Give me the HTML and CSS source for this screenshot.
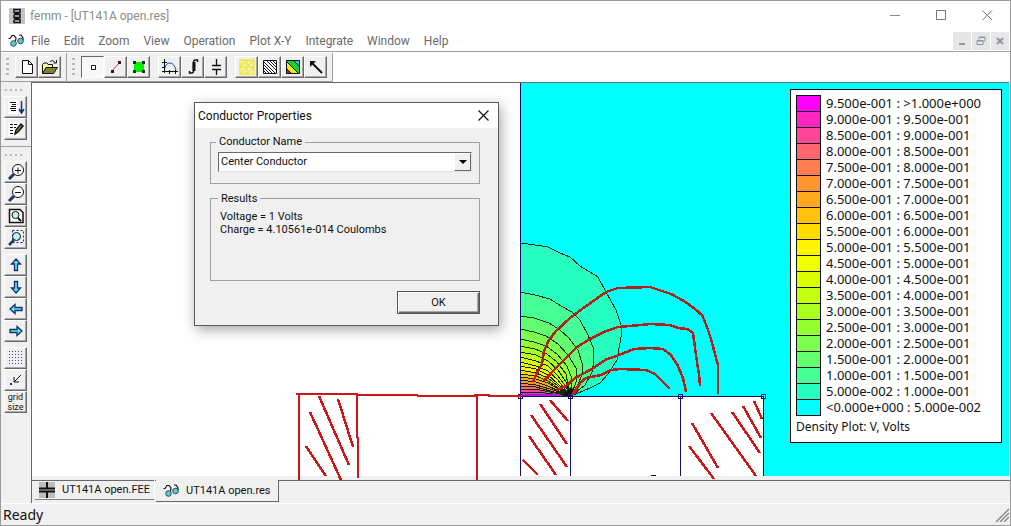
FILE: index.html
```html
<!DOCTYPE html>
<html lang="en">
<head>
<meta charset="utf-8">
<title>femm - [UT141A open.res]</title>
<link rel="stylesheet" href="styles.css">
</head>
<body>
<div class="window">
  <header class="titlebar">
    <svg class="app-icon" width="16" height="16" viewBox="0 0 16 16"><rect width="16" height="16" fill="#c4c4c4"/><g fill="none" stroke="#111" stroke-width="1.500"><path d="M4 1.500H11V4.500H5V2.500M11 4.500L5 6.500M6 6.500H11V9.500H5V7M11 9.500L5 11.500M6 11.500H11V14.500H5V12"/></g></svg>
    <h1 class="title">femm - [UT141A open.res]</h1>
    <div class="win-controls">
      <button class="win-btn" aria-label="Minimize"><svg width="11" height="11"><path d="M0 5.500H10" stroke="#888"/></svg></button>
      <button class="win-btn" aria-label="Maximize"><svg width="11" height="11"><path d="M.5.5H9.500V9.500H.5Z" fill="none" stroke="#777"/></svg></button>
      <button class="win-btn" aria-label="Close"><svg width="11" height="11"><path d="M.5.5L10 10M10 .5L.5 10" stroke="#777"/></svg></button>
    </div>
  </header>

  <nav class="menubar">
    <svg class="doc-icon" width="16" height="13" viewBox="0 0 16 13"><path d="M.5 4.500H2L4 1.500H6L8 4L7.500 7M11 1H13L15 4V6" fill="none" stroke="#111" stroke-width="1.200"/><circle cx="5.500" cy="9.500" r="2.800" fill="#6cc5c0" stroke="#256"/><circle cx="12.500" cy="7" r="2.800" fill="#6cc5c0" stroke="#256"/></svg>
    <button class="menu">File</button><button class="menu">Edit</button><button class="menu">Zoom</button><button class="menu">View</button><button class="menu">Operation</button><button class="menu">Plot X-Y</button><button class="menu">Integrate</button><button class="menu">Window</button><button class="menu">Help</button>
    <div class="mdi-controls">
      <button class="mdi-btn" aria-label="Minimize document"><svg width="10" height="10"><path d="M2 8H8" stroke="#8c96a4" stroke-width="2"/></svg></button>
      <button class="mdi-btn" aria-label="Restore document"><svg width="10" height="10"><path d="M3 3.500V1H9V5H7M3 1.500H9M1 4.500H7V8.500H1ZM1 5H7" fill="none" stroke="#8c96a4"/></svg></button>
      <button class="mdi-btn" aria-label="Close document"><svg width="10" height="10"><path d="M2 2L8 8M8 2L2 8" stroke="#8c96a4" stroke-width="2"/></svg></button>
    </div>
  </nav>

  <div class="toolbars">
    <div class="toolbar">
      <span class="grip"></span>
      <div class="group">
        <button class="tool" aria-label="New"><svg width="18" height="18"><path d="M4.500 2.500H10.500L14.500 6.500V15.500H4.500ZM10.500 2.500V6.500H14.500" fill="#fff" stroke="#111"/></svg></button>
        <button class="tool" aria-label="Open"><svg width="18" height="18"><path d="M1.500 15V6.500L3 5H6L7 6.500H11.500V9" fill="#fff59a" stroke="#111"/><path d="M1.500 15.500L5 9.500H16.500L12.500 15.500Z" fill="#85802a" stroke="#111"/><path d="M9 3.500Q12 1 14 4.500M15.500 2V5H12.500" fill="none" stroke="#111"/></svg></button>
      </div>
    </div>
    <div class="toolbar">
      <span class="grip"></span>
      <div class="group">
        <button class="tool pressed" aria-label="Point properties"><svg width="18" height="18"><path d="M7.500 7.500H11.500V11.500H7.500Z" fill="#fff" stroke="#111"/></svg></button>
        <button class="tool" aria-label="Contours"><svg width="18" height="18"><path d="M5 13L13 4" stroke="#e33"/><path d="M4 12H7V15H4ZM11 3H14V6H11Z" fill="#411"/></svg></button>
        <button class="tool" aria-label="Areas"><svg width="18" height="18"><path d="M4 4H14V14H4Z" fill="#00f000"/><path d="M3 3H6V6H3ZM12 3H15V6H12ZM3 12H6V15H3ZM12 12H15V15H12Z" fill="#131"/></svg></button>
      </div>
      <div class="group">
        <button class="tool" aria-label="Plot"><svg width="18" height="18"><path d="M3.500 1V15M1 13.500H17M1 4.500H6M1 9.500H4M8.500 12V16M14.500 12V16" stroke="#111"/><path d="M4 10Q5 5 9 5Q13 5 15 12" fill="none" stroke="#24b"/></svg></button>
        <button class="tool" aria-label="Integrate"><svg width="18" height="18"><path d="M13.500 4V2H11Q9.500 2 9.500 5V12Q9.500 15 8 15H5.500V13" fill="none" stroke="#111" stroke-width="1.500"/><path d="M10 4V13" stroke="#111" stroke-width="3"/></svg></button>
        <button class="tool" aria-label="Conductor properties"><svg width="18" height="18"><path d="M9.500 1V8M9.500 11V17M5 7.500H14M5 11.500H14" stroke="#111" stroke-width="1.300"/></svg></button>
      </div>
      <div class="group">
        <button class="tool" aria-label="Show mesh"><svg width="18" height="18"><path d="M2 2H16V16H2ZM9 2V16M2 9H16M2 9L9 2M9 9L16 2M2 16L9 9M9 16L16 9" fill="#f2efc8" stroke="#f1e735" stroke-width="1.300"/></svg></button>
        <button class="tool" aria-label="Contour plot"><svg width="18" height="18"><path d="M2.500 2.500H15.500V15.500H2.500Z" fill="#fff" stroke="#111"/><path d="M2 12L6 16M2 9L9 16M2 6L12 16M2 3L15 16M5 2L16 13M8 2L16 10M11 2L16 7" stroke="#111"/></svg></button>
        <button class="tool" aria-label="Density plot"><svg width="18" height="18"><path d="M2 2H16V16H2Z" fill="#18d12a"/><path d="M9 2H16V9Z" fill="#28cde0"/><path d="M2 3L15 16H2Z" fill="#f2ef00"/><path d="M2 10L8 16H2Z" fill="#c0c"/><path d="M2.500 2.500H15.500V15.500H2.500ZM2 10L8 16M2 3L15 16M9 2L16 9" fill="none" stroke="#111"/></svg></button>
        <button class="tool" aria-label="Vector plot"><svg width="18" height="18"><path d="M15 15L5 5" stroke="#111" stroke-width="2"/><path d="M3 3H9L3 9Z" fill="#111"/></svg></button>
      </div>
    </div>
    <div class="toolbar-rest"></div>
  </div>

  <div class="workspace">
    <aside class="sidebar">
      <div class="side-set">
        <span class="grip-h"></span>
        <div class="side-group">
          <button class="tool" aria-label="Output"><svg width="18" height="18"><path d="M1 2H11V16H1Z" fill="#fff"/><path d="M3 4.500H9M5 6.500H9M4 8.500H9M3 10.500H9M4 12.500H9" stroke="#111"/><path d="M14.500 3V14M12 11L14.500 15L17 11" fill="none" stroke="#137" stroke-width="1.500"/></svg></button>
          <button class="tool" aria-label="Notes"><svg width="18" height="18"><path d="M1 2H12V16H1Z" fill="#fff"/><path d="M3 4.500H10M3 7.500H9M3 10.500H7M3 13.500H7" stroke="#111" stroke-dasharray="3 1"/><path d="M8 14L9 10L14 4L16 6L11 12Z" fill="#885" stroke="#111" stroke-width="1.500"/></svg></button>
        </div>
      </div>
      <div class="side-set">
        <span class="grip-h"></span>
        <div class="side-group">
          <button class="tool" aria-label="Zoom in"><svg width="18" height="18"><circle cx="11" cy="7" r="5.500" fill="#fff" stroke="#111"/><path d="M8 7.500H14M11 4.500V10.500" stroke="#111"/><path d="M7 11L2 16" stroke="#236" stroke-width="3"/></svg></button>
          <button class="tool" aria-label="Zoom out"><svg width="18" height="18"><circle cx="11" cy="7" r="5.500" fill="#fff" stroke="#111"/><path d="M8 7.500H14" stroke="#111"/><path d="M7 11L2 16" stroke="#236" stroke-width="3"/></svg></button>
          <button class="tool" aria-label="Zoom to fit"><svg width="18" height="18"><path d="M2.500 2.500H13L16 5.500V15.500H2.500Z" fill="#fff" stroke="#111" stroke-width="1.500"/><circle cx="8.500" cy="8" r="3.500" fill="#bff4f6" stroke="#111"/><path d="M11 11L14 14" stroke="#111" stroke-width="2"/></svg></button>
          <button class="tool" aria-label="Zoom window"><svg width="18" height="18"><path d="M5.500 1.500H16.500V13.500H5.500Z" fill="none" stroke="#22a" stroke-dasharray="2 2"/><circle cx="9.500" cy="7.500" r="4" fill="#bff4f6" stroke="#111"/><path d="M7 11L2 16" stroke="#236" stroke-width="2.500"/></svg></button>
        </div>
        <div class="side-group">
          <button class="tool" aria-label="Pan up"><svg width="18" height="18"><path d="M9 3L13.500 8H10.500V14.500H7.500V8H4.500Z" fill="#62e3f4" stroke="#136" stroke-width="1.300"/></svg></button>
          <button class="tool" aria-label="Pan down"><svg width="18" height="18"><path d="M9 15L13.500 10H10.500V3.500H7.500V10H4.500Z" fill="#62e3f4" stroke="#136" stroke-width="1.300"/></svg></button>
          <button class="tool" aria-label="Pan left"><svg width="18" height="18"><path d="M3 9L8 4.500V7.500H15V10.500H8V13.500Z" fill="#62e3f4" stroke="#136" stroke-width="1.300"/></svg></button>
          <button class="tool" aria-label="Pan right"><svg width="18" height="18"><path d="M15 9L10 4.500V7.500H3V10.500H10V13.500Z" fill="#62e3f4" stroke="#136" stroke-width="1.300"/></svg></button>
        </div>
        <div class="side-group">
          <button class="tool" aria-label="Show grid"><svg width="18" height="18"><path d="M2 2.500H16M2 5.500H16M2 8.500H16M2 11.500H16M2 14.500H16" stroke="#44a" stroke-dasharray="1 2"/></svg></button>
          <button class="tool" aria-label="Snap to grid"><svg width="18" height="18"><path d="M14 4L7 11M7 6V11H12" fill="none" stroke="#111"/><path d="M3 12H5V14H3Z" fill="#22a"/></svg></button>
          <button class="tool tool-text">grid<br>size</button>
        </div>
      </div>
    </aside>

    <main class="document">
      <div class="view">
        <svg class="plot" width="100%" height="100%">
          <rect x="489" width="100%" height="100%" fill="#0ff"/>
          <g transform="translate(-32 -83)">
            <path d="M520 396H764V476H520Z" fill="#fff"/>
            <g stroke="#063008" stroke-width="1" shape-rendering="crispEdges">
              <path fill="#26ffc0" d="M520 243L535 245L548 247L560 253L570 257L580 266L598 277L606 292L616 310L621 325L621 337L617 360L608 374L600 383L590 388L571 396H520Z"/>
              <path fill="#46ff96" d="M520 292L535 295L550 299L561 306L572 312L580 320L588 335L593 347L594 360L592 372L585 385L571 396H520Z"/>
              <path fill="#64ff71" d="M520 316L534 318L549 323L560 330L569 338L578 350L582 363L582 374L578 385L571 396H520Z"/>
              <path fill="#7dff50" d="M520 329L534 332L546 336L558 344L568 355L576 368L577 379L571 396H520Z"/>
              <path fill="#96ff32" d="M520 339L534 342L546 346L557 354L567 366L572 379L571 396H520Z"/>
              <path fill="#aaff1e" d="M520 346L535 349L547 354L557 362L566 374L570 396H520Z"/>
              <path fill="#c3ff0f" d="M520 352L536 355L548 361L558 370L566 382L570 396H520Z"/>
              <path fill="#dcff00" d="M520 357L536 361L548 366L558 376L566 387L570 396H520Z"/>
              <path fill="#f0ff00" d="M520 362L536 366L548 371L558 380L570 396H520Z"/>
              <path fill="#fff500" d="M520 366L536 369L548 375L558 384L570 396H520Z"/>
              <path fill="#ffdc00" d="M520 370L536 373L548 378L558 386L570 396H520Z"/>
              <path fill="#ffc30f" d="M520 374L536 376L548 381L570 396H520Z"/>
              <path fill="#ffaa1e" d="M520 377L536 379L548 383L570 396H520Z"/>
              <path fill="#ff9632" d="M520 380L536 382L548 386L570 396H520Z"/>
              <path fill="#ff7d50" d="M520 383L536 385L550 389L570 396H520Z"/>
              <path fill="#ff6471" d="M520 386L536 387L550 391L570 396H520Z"/>
              <path fill="#ff4696" d="M520 389L540 390L570 396H520Z"/>
              <path fill="#e32bd0" d="M520 392L545 393L570 396H520Z"/>
            </g>
            <path d="M564 392L567 390L571 387L574 390L578 391L576 394L571 396H564Z" fill="#111"/>
            <g fill="none" stroke="#10106e" shape-rendering="crispEdges">
              <path d="M520.500 83V476M520 396.500H764M570.500 396V476M680.500 396V476M763.500 396V476"/>
              <path d="M518.500 394.500H522.500V398.500H518.500ZM568.500 394.500H572.500V398.500H568.500ZM678.500 394.500H682.500V398.500H678.500ZM761.500 394.500H765.500V398.500H761.500Z"/>
            </g>
            <path d="M522 395H560" stroke="#b01bd8" stroke-width="2"/>
            <g class="sketch">
              <path d="M296 394H357V395H417L418 396H475V395H489V396H521"/>
              <path d="M299 394V480M357 395V437L358 438V478M477 395V480"/>
            </g>
            <g class="sketch thick">
              <path d="M319 396L349 465M338 399L353 447M310 412L341 480M306 446L326 476"/>
              <path d="M550 400L568 421M540 404L567 444M531 415L567 467M529 436L556 475M523 460L538 475"/>
              <path d="M754 401L762 419M743 406L761 438M732 412L760 453M711 413L756 476M692 423L718 468M689 446L714 479"/>
            </g>
            <g class="sketch thick">
              <path class="dark" d="M533 382L537 373L542 364L544 351L549 340L556 331L570 318L582 309L606 292L618 288L650 287L659 290L671 294L684 301L695 309L702 315L707 327L711 339L716 358L718 365V394"/>
              <path class="dark" d="M544 381L549 375L560 364L577 347L590 339L604 332L618 327L641 325L650 324L670 325L678 328L687 329L693 333L695 348L697 362L699 374L700 386"/>
              <path class="dark" d="M556 390L566 386L575 378L592 369L605 360L619 355L634 349L650 348L663 349L671 355L677 364L683 378L686 392"/>
              <path class="dark" d="M573 393L580 383L586 378L601 375L611 370L620 369L646 370L655 374L661 380L670 389"/>
              <path d="M533 382L538 370M544 381L553 371M556 390L566 386M572 395L580 384M574 394L578 386"/>
            </g>
            <path d="M651 475.500H656" stroke="#111"/>
          </g>
        </svg>

        <section class="legend">
          <ul class="scale">
            <li><i class="swatch c20"></i>9.500e-001 : &gt;1.000e+000</li>
            <li><i class="swatch c19"></i>9.000e-001 : 9.500e-001</li>
            <li><i class="swatch c18"></i>8.500e-001 : 9.000e-001</li>
            <li><i class="swatch c17"></i>8.000e-001 : 8.500e-001</li>
            <li><i class="swatch c16"></i>7.500e-001 : 8.000e-001</li>
            <li><i class="swatch c15"></i>7.000e-001 : 7.500e-001</li>
            <li><i class="swatch c14"></i>6.500e-001 : 7.000e-001</li>
            <li><i class="swatch c13"></i>6.000e-001 : 6.500e-001</li>
            <li><i class="swatch c12"></i>5.500e-001 : 6.000e-001</li>
            <li><i class="swatch c11"></i>5.000e-001 : 5.500e-001</li>
            <li><i class="swatch c10"></i>4.500e-001 : 5.000e-001</li>
            <li><i class="swatch c9"></i>4.000e-001 : 4.500e-001</li>
            <li><i class="swatch c8"></i>3.500e-001 : 4.000e-001</li>
            <li><i class="swatch c7"></i>3.000e-001 : 3.500e-001</li>
            <li><i class="swatch c6"></i>2.500e-001 : 3.000e-001</li>
            <li><i class="swatch c5"></i>2.000e-001 : 2.500e-001</li>
            <li><i class="swatch c4"></i>1.500e-001 : 2.000e-001</li>
            <li><i class="swatch c3"></i>1.000e-001 : 1.500e-001</li>
            <li><i class="swatch c2"></i>5.000e-002 : 1.000e-001</li>
            <li><i class="swatch c1"></i>&lt;0.000e+000 : 5.000e-002</li>
          </ul>
          <p class="caption">Density Plot: V, Volts</p>
        </section>
      </div>
      <div class="tabs">
        <button class="tab"><svg width="16" height="16"><rect width="16" height="16" fill="#bdbdbd"/><path d="M8 0V6M8 10V16M0 6.500H16M0 9.500H16" stroke="#111" stroke-width="2"/></svg>UT141A open.FEE</button>
        <button class="tab active"><svg width="16" height="13" viewBox="0 0 16 13"><path d="M.5 4.500H2L4 1.500H6L8 4L7.500 7M11 1H13L15 4V6" fill="none" stroke="#111" stroke-width="1.200"/><circle cx="5.500" cy="9.500" r="2.800" fill="#6cc5c0" stroke="#256"/><circle cx="12.500" cy="7" r="2.800" fill="#6cc5c0" stroke="#256"/></svg>UT141A open.res</button>
      </div>
    </main>
  </div>

  <footer class="status">
    <span>Ready</span>
    <svg width="14" height="14"><path d="M1 14L14 1M5 14L14 5M9 14L14 9" stroke="#8c8c8c" stroke-width="1.500"/></svg>
  </footer>

  <div class="dialog" role="dialog" aria-labelledby="dialog-title">
    <div class="dialog-bar">
      <h2 class="dialog-title" id="dialog-title">Conductor Properties</h2>
      <button class="dialog-close" aria-label="Close dialog"><svg width="11" height="11"><path d="M.5.5L10.500 10.500M10.500 .5L.5 10.500" stroke="#111" stroke-width="1.200"/></svg></button>
    </div>
    <form class="dialog-body">
      <fieldset class="box">
        <legend>Conductor Name</legend>
        <div class="combo">
          <select aria-label="Conductor Name"><option>Center Conductor</option></select>
          <span class="combo-arrow"><svg width="8" height="4"><path d="M0 0H8L4 4Z" fill="#000"/></svg></span>
        </div>
      </fieldset>
      <fieldset class="box results">
        <legend>Results</legend>
        <p>Voltage = 1 Volts</p>
        <p>Charge = 4.10561e-014 Coulombs</p>
      </fieldset>
      <button class="ok" type="button">OK</button>
    </form>
  </div>
</div>
</body>
</html>
```

FILE: styles.css
```css
* { box-sizing: border-box; }
body {
  margin: 0;
  font: 12px/16px Roboto, "Noto Sans", sans-serif;
  color: #111;
}
h1, h2, p, ul { margin: 0; padding: 0; font-weight: normal; }
svg { display: block; flex: none; }
button {
  margin: 0;
  padding: 0;
  border: 0;
  background: none;
  font: inherit;
  color: inherit;
}

.window {
  position: relative;
  display: flex;
  flex-direction: column;
  height: 100vh;
  border: 1px solid #9a9a9a;
  background: #f0f0f0;
}

/* Title and menu */
.titlebar {
  display: flex;
  align-items: center;
  height: 29px;
  padding-left: 8px;
  background: #fff;
  color: #8c8c8c;
}
.title { margin-left: 5px; font-size: 12px; }
.win-controls { display: flex; margin-left: auto; }
.win-btn { display: grid; place-items: center; width: 46px; height: 29px; }
.menubar {
  display: flex;
  align-items: center;
  height: 22px;
  padding-left: 7px;
  border-bottom: 1px solid #a0a0a0;
  background: #fff;
  color: #6a6a6a;
}
.menu { padding: 0 7px; }
.mdi-controls { display: flex; gap: 1px; margin-left: auto; padding-right: 1px; }
.mdi-btn { display: grid; place-items: center; width: 18px; height: 18px; background: #e6e6e6; }

/* Toolbars */
.toolbars { display: flex; height: 30px; border-top: 1px solid #fff; }
.toolbar {
  display: flex;
  align-items: center;
  gap: 6px;
  padding: 0 5px;
  border-right: 1px solid #a0a0a0;
  border-bottom: 1px solid #a0a0a0;
}
.toolbar-rest { flex: 1; background: #fff; }
.grip {
  width: 3px;
  height: 18px;
  background: repeating-linear-gradient(#b8b8b8 0 2px, transparent 2px 5px);
}
.group { display: flex; }
.group + .group { margin-left: 2px; }
.tool {
  display: grid;
  place-items: center;
  width: 23px;
  height: 22px;
  border: 1px solid;
  border-color: #fff #696969 #696969 #fff;
  box-shadow: inset -1px -1px #a8a8a8;
  background: #f0f0f0;
}
.pressed {
  border-color: #696969 #fff #fff #696969;
  box-shadow: none;
  background: #f8f8f8;
}

/* Work area */
.workspace { display: flex; flex: 1; min-height: 0; }
.sidebar { width: 30px; background: #f0f0f0; }
.side-set {
  display: flex;
  flex-direction: column;
  gap: 5px;
  padding: 7px 3px 6px;
}
.side-set + .side-set { border-top: 1px solid #a0a0a0; }
.grip-h {
  width: 20px;
  height: 2px;
  margin: 0 1px;
  background: repeating-linear-gradient(90deg, #b8b8b8 0 2px, transparent 2px 5px);
}
.tool-text { font-size: 9px; line-height: 10px; }
.document {
  display: flex;
  flex: 1;
  flex-direction: column;
  min-width: 0;
  border-left: 1px solid #696969;
}
.view {
  position: relative;
  flex: 1;
  margin-right: 1px;
  border-top: 1px solid #696969;
  background: #fff;
}
.plot { position: absolute; inset: 0; overflow: visible; z-index: 1; clip-path: inset(0 0 -5px 0); }
.sketch { fill: none; stroke: #cf1717; stroke-width: 2; stroke-linejoin: round; shape-rendering: crispEdges; }
.thick { stroke-width: 2.5; }
.dark { stroke: #b02118; }

/* Colour scale */
.legend {
  position: absolute;
  z-index: 2;
  top: 6px;
  right: 7px;
  width: 212px;
  padding: 5px 5px 7px;
  border: 1px solid #000;
  background: #fff;
  font-family: "Noto Sans", sans-serif;
  font-size: 13px;
}
.scale { list-style: none; }
.scale li { display: flex; align-items: center; gap: 5px; height: 16px; white-space: nowrap; }
.swatch { width: 25px; height: 17px; margin-bottom: -1px; border: 1px solid #111; }
.caption { margin-top: 4px; font-size: 12px; }
.c20 { background: #f0f; }
.c19 { background: #ff26c0; }
.c18 { background: #ff4696; }
.c17 { background: #ff6471; }
.c16 { background: #ff7d50; }
.c15 { background: #ff9632; }
.c14 { background: #ffaa1e; }
.c13 { background: #ffc30f; }
.c12 { background: #ffdc00; }
.c11 { background: #fff500; }
.c10 { background: #f0ff00; }
.c9 { background: #dcff00; }
.c8 { background: #c3ff0f; }
.c7 { background: #aaff1e; }
.c6 { background: #96ff32; }
.c5 { background: #7dff50; }
.c4 { background: #64ff71; }
.c3 { background: #46ff96; }
.c2 { background: #26ffc0; }
.c1 { background: #0ff; }

/* Tabs and status */
.tabs {
  display: flex;
  align-items: flex-start;
  gap: 1px;
  height: 27px;
  padding: 4px 0 0 3px;
  background: linear-gradient(#f0f0f0 4px, #696969 4px 5px, #f0f0f0 5px);
}
.tab {
  display: flex;
  align-items: center;
  gap: 7px;
  height: 20px;
  padding: 0 4px;
  border-bottom: 1px solid #808080;
  border-right: 1px solid #fff;
  font-size: 11px;
}
.tab.active {
  height: 22px;
  padding: 0 7px;
  border: 1px solid #696969;
  border-width: 0 1px 1px 0;
  background: #f0f0f0;
}
.status {
  display: flex;
  align-items: center;
  justify-content: space-between;
  height: 22px;
  padding: 0 1px 0 2px;
  border-top: 1px solid #fff;
  font-family: "Noto Sans", sans-serif;
  font-size: 14px;
}

/* Dialog */
.dialog {
  position: absolute;
  z-index: 5;
  top: 101px;
  left: 193px;
  width: 305px;
  border: 1px solid #5a5a5a;
  background: #f0f0f0;
  box-shadow: 2px 4px 12px rgba(0, 0, 0, .35);
  font-size: 11px;
}
.dialog-bar {
  display: flex;
  align-items: center;
  justify-content: space-between;
  height: 25px;
  padding: 0 9px 0 3px;
  background: #fff;
}
.dialog-title { font-size: 12px; }
.dialog-body { display: flex; flex-direction: column; padding: 7px 18px 11px 15px; }
.box {
  margin: 0;
  padding: 3px 7px 11px;
  border: 1px solid #a0a0a0;
  line-height: 14px;
}
.box legend { margin-left: -2px; padding: 0 3px; }
.results { height: 89px; margin-top: 8px; padding: 5px 9px; line-height: 13px; }
.combo { position: relative; }
.combo select {
  appearance: none;
  display: block;
  width: 100%;
  height: 20px;
  padding: 0 2px;
  border: 1px solid;
  border-color: #696969 #e3e3e3 #e3e3e3 #696969;
  border-radius: 0;
  background: #fff;
  font: inherit;
  color: inherit;
}
.combo-arrow {
  position: absolute;
  top: 1px;
  right: 1px;
  display: grid;
  place-items: center;
  width: 17px;
  height: 18px;
  border: 1px solid;
  border-color: #fff #696969 #696969 #fff;
  background: #f0f0f0;
  pointer-events: none;
}
.ok {
  align-self: flex-end;
  width: 83px;
  height: 23px;
  margin-top: 10px;
  border: 1px solid #555;
  box-shadow: inset 1px 1px #fff, inset -1px -1px #696969, inset -2px -2px #a8a8a8;
}
```
